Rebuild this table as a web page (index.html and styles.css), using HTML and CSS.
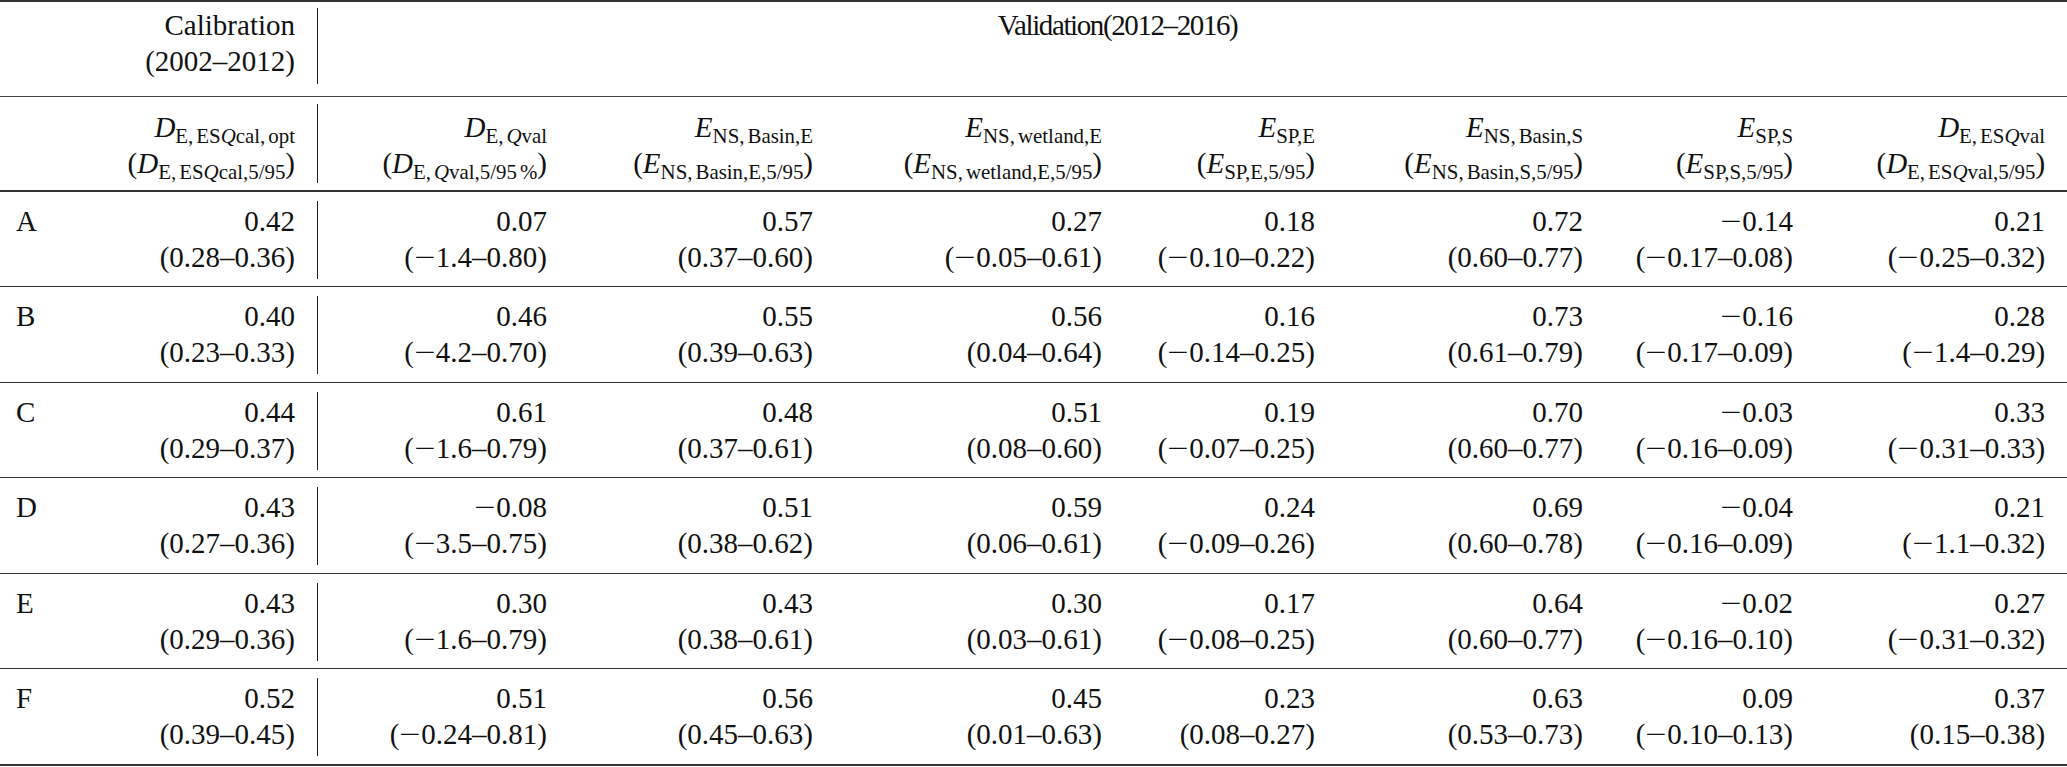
FILE: index.html
```html
<!DOCTYPE html>
<html lang="en">
<head>
<meta charset="utf-8">
<title>Calibration and validation table</title>
<link rel="stylesheet" href="styles.css">
</head>
<body>
<table class="tbl">
  <colgroup>
    <col class="w-lab"><col class="w-cal"><col class="w-c2"><col class="w-c3"><col class="w-c4"><col class="w-c5"><col class="w-c6"><col class="w-c7"><col class="w-c8">
  </colgroup>
  <thead>
    <tr class="r-period">
      <td colspan="2" class="cal"><div class="vb">Calibration<br>(2002–2012)</div></td>
      <td colspan="7" class="val">Validation(2012–2016)</td>
    </tr>
    <tr class="r-names">
      <td class="lab"></td>
      <td class="cal"><div class="vb"><i>D</i><sub>E,<span class="s"></span>ES<i>Q</i>cal,<span class="s"></span>opt</sub><br>(<i>D</i><sub>E,<span class="s"></span>ES<i>Q</i>cal,5/95</sub>)</div></td>
      <td><i>D</i><sub>E,<span class="s"></span><i>Q</i>val</sub><br>(<i>D</i><sub>E,<span class="s"></span><i>Q</i>val,5/95<span class="s"></span>%</sub>)</td>
      <td><i>E</i><sub>NS,<span class="s"></span>Basin,E</sub><br>(<i>E</i><sub>NS,<span class="s"></span>Basin,E,5/95</sub>)</td>
      <td><i>E</i><sub>NS,<span class="s"></span>wetland,E</sub><br>(<i>E</i><sub>NS,<span class="s"></span>wetland,E,5/95</sub>)</td>
      <td><i>E</i><sub>SP,E</sub><br>(<i>E</i><sub>SP,E,5/95</sub>)</td>
      <td><i>E</i><sub>NS,<span class="s"></span>Basin,S</sub><br>(<i>E</i><sub>NS,<span class="s"></span>Basin,S,5/95</sub>)</td>
      <td><i>E</i><sub>SP,S</sub><br>(<i>E</i><sub>SP,S,5/95</sub>)</td>
      <td class="last"><i>D</i><sub>E,<span class="s"></span>ES<i>Q</i>val</sub><br>(<i>D</i><sub>E,<span class="s"></span>ES<i>Q</i>val,5/95</sub>)</td>
    </tr>
  </thead>
  <tbody>
    <tr>
      <td class="lab">A</td>
      <td class="cal"><div class="vb">0.42<br>(0.28–0.36)</div></td>
      <td>0.07<br>(<span class="m">−</span>1.4–0.80)</td>
      <td>0.57<br>(0.37–0.60)</td>
      <td>0.27<br>(<span class="m">−</span>0.05–0.61)</td>
      <td>0.18<br>(<span class="m">−</span>0.10–0.22)</td>
      <td>0.72<br>(0.60–0.77)</td>
      <td><span class="m">−</span>0.14<br>(<span class="m">−</span>0.17–0.08)</td>
      <td class="last">0.21<br>(<span class="m">−</span>0.25–0.32)</td>
    </tr>
    <tr>
      <td class="lab">B</td>
      <td class="cal"><div class="vb">0.40<br>(0.23–0.33)</div></td>
      <td>0.46<br>(<span class="m">−</span>4.2–0.70)</td>
      <td>0.55<br>(0.39–0.63)</td>
      <td>0.56<br>(0.04–0.64)</td>
      <td>0.16<br>(<span class="m">−</span>0.14–0.25)</td>
      <td>0.73<br>(0.61–0.79)</td>
      <td><span class="m">−</span>0.16<br>(<span class="m">−</span>0.17–0.09)</td>
      <td class="last">0.28<br>(<span class="m">−</span>1.4–0.29)</td>
    </tr>
    <tr>
      <td class="lab">C</td>
      <td class="cal"><div class="vb">0.44<br>(0.29–0.37)</div></td>
      <td>0.61<br>(<span class="m">−</span>1.6–0.79)</td>
      <td>0.48<br>(0.37–0.61)</td>
      <td>0.51<br>(0.08–0.60)</td>
      <td>0.19<br>(<span class="m">−</span>0.07–0.25)</td>
      <td>0.70<br>(0.60–0.77)</td>
      <td><span class="m">−</span>0.03<br>(<span class="m">−</span>0.16–0.09)</td>
      <td class="last">0.33<br>(<span class="m">−</span>0.31–0.33)</td>
    </tr>
    <tr>
      <td class="lab">D</td>
      <td class="cal"><div class="vb">0.43<br>(0.27–0.36)</div></td>
      <td><span class="m">−</span>0.08<br>(<span class="m">−</span>3.5–0.75)</td>
      <td>0.51<br>(0.38–0.62)</td>
      <td>0.59<br>(0.06–0.61)</td>
      <td>0.24<br>(<span class="m">−</span>0.09–0.26)</td>
      <td>0.69<br>(0.60–0.78)</td>
      <td><span class="m">−</span>0.04<br>(<span class="m">−</span>0.16–0.09)</td>
      <td class="last">0.21<br>(<span class="m">−</span>1.1–0.32)</td>
    </tr>
    <tr>
      <td class="lab">E</td>
      <td class="cal"><div class="vb">0.43<br>(0.29–0.36)</div></td>
      <td>0.30<br>(<span class="m">−</span>1.6–0.79)</td>
      <td>0.43<br>(0.38–0.61)</td>
      <td>0.30<br>(0.03–0.61)</td>
      <td>0.17<br>(<span class="m">−</span>0.08–0.25)</td>
      <td>0.64<br>(0.60–0.77)</td>
      <td><span class="m">−</span>0.02<br>(<span class="m">−</span>0.16–0.10)</td>
      <td class="last">0.27<br>(<span class="m">−</span>0.31–0.32)</td>
    </tr>
    <tr>
      <td class="lab">F</td>
      <td class="cal"><div class="vb">0.52<br>(0.39–0.45)</div></td>
      <td>0.51<br>(<span class="m">−</span>0.24–0.81)</td>
      <td>0.56<br>(0.45–0.63)</td>
      <td>0.45<br>(0.01–0.63)</td>
      <td>0.23<br>(0.08–0.27)</td>
      <td>0.63<br>(0.53–0.73)</td>
      <td>0.09<br>(<span class="m">−</span>0.10–0.13)</td>
      <td class="last">0.37<br>(0.15–0.38)</td>
    </tr>
  </tbody>
</table>
</body>
</html>
```
FILE: styles.css
```css
html, body {
  margin: 0;
  padding: 0;
  background: #ffffff;
}

body {
  color: #111111;
  font-family: "Liberation Serif", "Times New Roman", serif;
  font-size: 29px;
}

.tbl {
  border-collapse: collapse;
  table-layout: fixed;
  width: 2067px;
}

.w-lab { width: 70px; }
.w-cal { width: 248px; }
.w-c2 { width: 229px; }
.w-c3 { width: 266px; }
.w-c4 { width: 289px; }
.w-c5 { width: 213px; }
.w-c6 { width: 268px; }
.w-c7 { width: 210px; }
.w-c8 { width: 274px; }

.tbl td {
  line-height: 35.5px;
  vertical-align: top;
  text-align: right;
  white-space: nowrap;
}

.tbl td.last {
  padding-right: 22px;
}

.tbl td.lab {
  text-align: left;
  padding-left: 16px;
}

.vb {
  box-sizing: border-box;
  padding-right: 22px;
  border-right: 1.5px solid #222222;
}

/* header row 1: period labels */
.r-period {
  border-top: 2px solid #333333;
  border-bottom: 1px solid #444444;
}

.r-period td {
  padding: 6px 0 12px 0;
}

.r-period .vb {
  height: 76px;
}

.r-period td.val {
  text-align: center;
  letter-spacing: -1.4px;
  padding-right: 150px;
}

/* header row 2: variable names */
.r-names {
  border-bottom: 2px solid #333333;
}

.r-names td {
  padding: 13px 0 9px 0;
}

.r-names td.cal {
  padding: 7px 0 7px 0;
}

.r-names .vb {
  height: 79px;
  padding-top: 6px;
}

/* body rows */
tbody tr {
  border-bottom: 1px solid #333333;
}

tbody tr:last-child {
  border-bottom: 2px solid #333333;
}

tbody td {
  padding: 12px 0 11px 0;
}

tbody td.cal {
  padding: 9px 0 7px 0;
}

tbody .vb {
  height: 78px;
  padding-top: 3px;
}

tbody tr:nth-child(even) td {
  padding-bottom: 12px;
}

tbody tr:nth-child(even) td.cal {
  padding-bottom: 8px;
}

/* wide math minus sign */
.m {
  display: inline-block;
  width: 0.76em;
  text-align: center;
  transform: scaleX(1.3);
}

sub {
  font-size: 0.72em;
  vertical-align: -0.3em;
  line-height: 0;
}

i {
  font-style: italic;
}

.s {
  display: inline-block;
  width: 3px;
}
```
